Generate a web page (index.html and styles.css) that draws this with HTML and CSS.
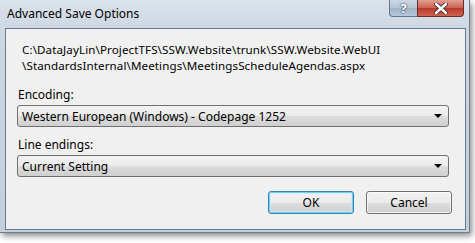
FILE: index.html
```html
<!DOCTYPE html>
<html lang="en">
<head>
    <meta charset="UTF-8">
    <title>Advanced Save Options</title>
    <link rel="stylesheet" href="styles.css">
</head>
<body>
    <section class="window">
        <header class="titlebar">
            <span class="title">Advanced Save Options</span>
            <div class="caption">
                <span class="cap help">?</span>
                <span class="cap close">
                    <svg width="14" height="11" viewBox="0 0 14 11">
                        <path d="M2 1 L12 10 M12 1 L2 10" stroke="#3a2a2a" stroke-width="4.2" stroke-linecap="round"/>
                        <path d="M2 1 L12 10 M12 1 L2 10" stroke="#fff" stroke-width="2.4" stroke-linecap="round"/>
                    </svg>
                </span>
            </div>
        </header>
        <div class="client">
            <p class="path">C:\DataJayLin\ProjectTFS\SSW.Website\trunk\SSW.Website.WebUI</p>
            <p class="path">\StandardsInternal\Meetings\MeetingsScheduleAgendas.aspx</p>

            <label class="label">Encoding:</label>
            <div class="combo">
                <span>Western European (Windows) - Codepage 1252</span>
                <i class="arrow"></i>
            </div>

            <label class="label second">Line endings:</label>
            <div class="combo">
                <span>Current Setting</span>
                <i class="arrow"></i>
            </div>

            <div class="buttons">
                <button class="btn default">OK</button>
                <button class="btn">Cancel</button>
            </div>
        </div>
    </section>
</body>
</html>
```

FILE: styles.css
```css
*{
    margin: 0;
    padding: 0;
    box-sizing: border-box;
}
html,body{
    width: 475px;
    height: 243px;
    overflow: hidden;
    background: #fff;
}
body{
    font-family: "Noto Sans", "Open Sans", sans-serif;
    font-size: 12px;
    color: #000;
}
.window{
    width: 470px;
    height: 233px;
    display: flex;
    flex-direction: column;
    padding: 0 3px 2px 5px;
    background: linear-gradient(to bottom, #dae2eb 0, #cdd7e2 30px, #c3cfdc 100%);
    border-right: 1px solid #6f7c8b;
    border-bottom: 1px solid #6f7c8b;
    box-shadow: 2px 3px 6px rgba(0,0,0,.45);
}
.titlebar{
    height: 28px;
    display: flex;
    justify-content: space-between;
    align-items: flex-start;
}
.title{
    margin: 6px 0 0 2px;
    line-height: 15px;
    color: #000;
}
.caption{
    display: flex;
    margin-right: 2px;
}
.cap{
    height: 17px;
    display: flex;
    align-items: center;
    justify-content: center;
    border: 1px solid #66768a;
    border-top: none;
}
.help{
    width: 28px;
    border-radius: 0 0 0 4px;
    background: linear-gradient(to bottom, #cdd8e4 0, #b4c3d4 50%, #9fb2c7 51%, #b6c7d9 100%);
    color: #fff;
    font-weight: bold;
    font-size: 13px;
    text-shadow: 0 0 2px #2d3a4a, 0 0 1px #2d3a4a;
    border-right: none;
}
.close{
    width: 47px;
    border-radius: 0 0 4px 0;
    border-color: #6e2e28;
    background: linear-gradient(to bottom, #e0a094 0, #cc5f4f 50%, #b8382a 51%, #cf6450 100%);
}
.client{
    flex: 1;
    border: 1px solid #687a90;
    background: #f0f0f0;
    padding: 13px 16px 0 11px;
    display: flex;
    flex-direction: column;
}
.path{
    margin-left: 5px;
    font-size: 11.6px;
    letter-spacing: .1px;
    line-height: 16px;
    height: 16px;
}
.label{
    margin: 13px 0 0 1px;
    line-height: 15px;
}
.label.second{
    margin-top: 10px;
}
.combo{
    height: 22px;
    margin-top: 3px;
    border: 1px solid #707070;
    border-radius: 3px;
    background: linear-gradient(to bottom, #f2f2f2 0, #ebebeb 50%, #dddddd 51%, #cfcfcf 100%);
    display: flex;
    align-items: center;
    justify-content: space-between;
    padding: 0 6px 0 4px;
}
.arrow{
    width: 0;
    height: 0;
    border-left: 4px solid transparent;
    border-right: 4px solid transparent;
    border-top: 4px solid #000;
}
.buttons{
    display: flex;
    justify-content: flex-end;
    gap: 12px;
    margin: 14px -3px 0 0;
}
.btn{
    width: 86px;
    height: 23px;
    font: inherit;
    color: #000;
    border: 1px solid #707070;
    border-radius: 3px;
    background: linear-gradient(to bottom, #f2f2f2 0, #ebebeb 50%, #dddddd 51%, #cfcfcf 100%);
    box-shadow: inset 0 0 0 1px rgba(255,255,255,.7);
}
.btn.default{
    border-color: #3c7fb1;
    box-shadow: inset 0 0 0 1px #6fd0f5, inset 0 0 0 2px rgba(200,238,252,.6);
}
```
